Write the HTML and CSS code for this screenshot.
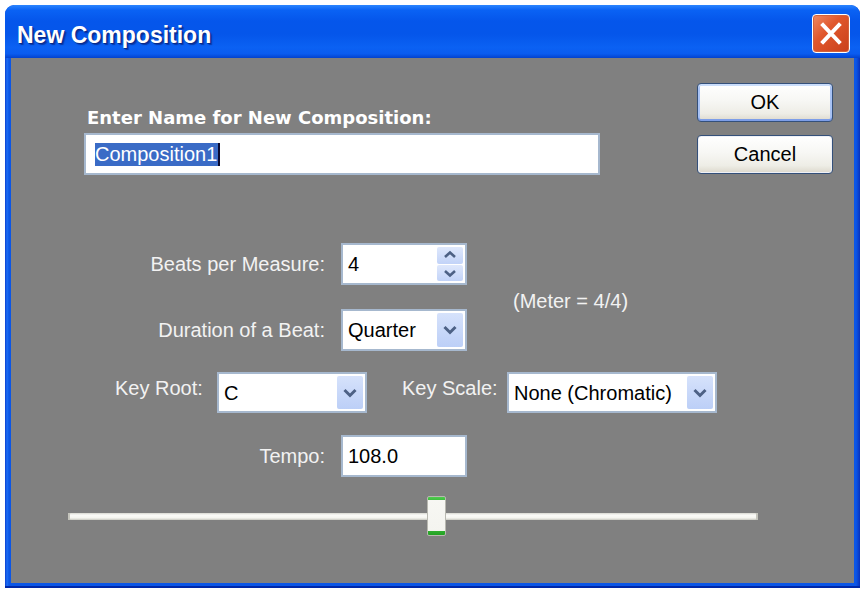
FILE: index.html
```html
<!DOCTYPE html>
<html>
<head>
<meta charset="utf-8">
<title>New Composition</title>
<link rel="stylesheet" href="styles.css">
</head>
<body>
<div class="window">
  <div class="titlebar">
    <span class="title">New Composition</span>
    <div class="close">
      <svg viewBox="0 0 38 39" width="38" height="39"><path d="M11 11 L27 28 M27 11 L11 28" stroke="#fff" stroke-width="4" stroke-linecap="square" fill="none"/></svg>
    </div>
  </div>
  <div class="client">
    <div class="top">
      <div class="name-block">
        <div class="name-label">Enter Name for New Composition:</div>
        <div class="field name-field"><span class="sel">Composition1</span><span class="caret"></span></div>
      </div>
      <div class="buttons">
        <div class="btn btn-default">OK</div>
        <div class="btn">Cancel</div>
      </div>
    </div>

    <div class="meter-grid">
      <div class="label">Beats per Measure:</div>
      <div class="field box">
        <span class="value">4</span>
        <div class="spin">
          <div class="spin-btn"><svg viewBox="0 0 26 16" width="26" height="16"><polyline points="8,10 13,5.5 18,10" stroke="#4d6185" stroke-width="2.6" fill="none"/></svg></div>
          <div class="spin-btn"><svg viewBox="0 0 26 16" width="26" height="16"><polyline points="8,6 13,10.5 18,6" stroke="#4d6185" stroke-width="2.6" fill="none"/></svg></div>
        </div>
      </div>
      <div class="meter">(Meter = 4/4)</div>
      <div class="label">Duration of a Beat:</div>
      <div class="field box">
        <span class="value">Quarter</span>
        <div class="drop-btn"><svg viewBox="0 0 26 32" width="26" height="32"><polyline points="7.5,13 13,18.5 18.5,13" stroke="#4d6185" stroke-width="3" fill="none"/></svg></div>
      </div>
    </div>

    <div class="key-row">
      <div class="key-label">Key Root:</div>
      <div class="field key-root">
        <span class="value">C</span>
        <div class="drop-btn"><svg viewBox="0 0 26 32" width="26" height="32"><polyline points="7.5,13 13,18.5 18.5,13" stroke="#4d6185" stroke-width="3" fill="none"/></svg></div>
      </div>
      <div class="key-label scale-label">Key Scale:</div>
      <div class="field key-scale">
        <span class="value">None (Chromatic)</span>
        <div class="drop-btn"><svg viewBox="0 0 26 32" width="26" height="32"><polyline points="7.5,13 13,18.5 18.5,13" stroke="#4d6185" stroke-width="3" fill="none"/></svg></div>
      </div>
    </div>

    <div class="tempo-grid">
      <div class="label">Tempo:</div>
      <div class="field box"><span class="value">108.0</span></div>
    </div>

    <div class="slider">
      <div class="track"></div>
      <div class="thumb"></div>
    </div>
  </div>
</div>
</body>
</html>
```

FILE: styles.css
```css
html, body {
  margin: 0;
  padding: 0;
  background: #ffffff;
}

body {
  font-family: "Liberation Sans", Arial, sans-serif;
  font-size: 20px;
}

.window {
  margin: 5px 0 0 5px;
  width: 855px;
  height: 583px;
  box-sizing: border-box;
  display: flex;
  flex-direction: column;
  border-radius: 9px 9px 0 0;
  overflow: hidden;
  background: linear-gradient(to right, #0a3fcf 0px, #1d6df4 2px, #0b56e6 4px, #0b56e6 calc(100% - 4px), #0a44d2 calc(100% - 2px), #0831b8 100%);
  padding: 0 6px 5px 6px;
  box-shadow: inset 0 -2px 0 #0028a8;
}

.titlebar {
  height: 53px;
  flex: none;
  margin: 0 -6px;
  padding: 0 10px 0 12px;
  display: flex;
  justify-content: space-between;
  align-items: flex-start;
  background: linear-gradient(to bottom, #2b85ff 0%, #0a62f4 10%, #0556eb 30%, #0556ea 55%, #0b61f3 80%, #0a5cf0 92%, #0342cd 100%);
  border-radius: 9px 9px 0 0;
}

.title {
  margin-top: 15px;
  line-height: 30px;
  font-family: "Liberation Sans", Arial, sans-serif;
  font-weight: bold;
  font-size: 23px;
  color: #ffffff;
  text-shadow: 1px 1px 0 #0b2a8a, 2px 2px 1px rgba(0, 20, 100, 0.5);
}

.close {
  margin-top: 9px;
  width: 38px;
  height: 39px;
  box-sizing: border-box;
  border: 1px solid #ffffff;
  border-radius: 4px;
  background: linear-gradient(135deg, #f08a63 0%, #e0572c 40%, #c9401a 100%);
  box-shadow: inset 0 0 0 1px #d4623b;
}

.close svg {
  display: block;
  margin: -1px;
}

.client {
  flex: 1;
  background: #808080;
  display: flex;
  flex-direction: column;
}

.top {
  display: flex;
  align-items: flex-start;
}

.name-block {
  margin-left: 73px;
  margin-top: 49px;
}

.name-label {
  font-family: "DejaVu Sans", sans-serif;
  font-weight: bold;
  font-size: 18px;
  line-height: 22px;
  color: #ffffff;
  margin-left: 3px;
}

.field {
  background: #ffffff;
  border: 2px solid #a6b8ce;
  box-sizing: border-box;
  position: relative;
  display: flex;
  align-items: center;
  color: #000000;
}

.name-field {
  margin-top: 4px;
  width: 516px;
  height: 42px;
  padding-left: 9px;
}

.sel {
  background: #3a6bc6;
  color: #ffffff;
  line-height: 23px;
  padding-right: 1px;
}

.caret {
  width: 2px;
  height: 23px;
  background: #0a0a30;
}

.buttons {
  margin-left: auto;
  margin-right: 21px;
  margin-top: 25px;
  display: flex;
  flex-direction: column;
  gap: 13px;
}

.btn {
  width: 136px;
  height: 39px;
  box-sizing: border-box;
  border: 1px solid #34507a;
  border-radius: 4px;
  background: linear-gradient(to bottom, #ffffff 0%, #f7f7f4 45%, #eeede6 80%, #dcd8cc 100%);
  box-shadow: inset 0 0 0 1px #eef0f6;
  display: flex;
  align-items: center;
  justify-content: center;
  color: #000000;
}

.btn-default {
  box-shadow: inset 0 2px 0 #c9dcfa, inset 0 -2px 0 #7d9ee8, inset 2px 0 0 #a8c2f4, inset -2px 0 0 #a8c2f4;
}

.meter-grid,
.tempo-grid {
  display: grid;
  grid-template-columns: 314px 126px auto;
  column-gap: 16px;
  align-items: center;
}

.meter-grid {
  margin-top: 68px;
  grid-template-rows: 42px 42px;
  row-gap: 24px;
}

.label {
  text-align: right;
  color: #f2f2f2;
  line-height: 24px;
}

.box {
  height: 42px;
  padding-left: 5px;
}

.meter-grid .box:nth-of-type(2) {
  grid-column: 2;
  grid-row: 1;
}

.meter {
  grid-column: 3;
  grid-row: 1 / span 2;
  margin-left: 30px;
  margin-top: 8px;
  color: #f2f2f2;
  line-height: 24px;
}

.value {
  line-height: 24px;
}

.spin {
  position: absolute;
  right: 2px;
  top: 2px;
  bottom: 2px;
  width: 26px;
  display: flex;
  flex-direction: column;
  gap: 1px;
}

.spin-btn {
  flex: 1;
  background: linear-gradient(to bottom, #dfe8fc, #c2d3f8);
  border-radius: 2px;
  display: flex;
  align-items: center;
  justify-content: center;
}

.spin-btn svg {
  display: block;
}

.drop-btn {
  position: absolute;
  right: 2px;
  top: 2px;
  bottom: 2px;
  width: 26px;
  border-radius: 2px;
  background: linear-gradient(to bottom, #d6e2fb, #bccff7);
  display: flex;
  align-items: center;
  justify-content: center;
}

.drop-btn svg {
  display: block;
}

.key-row {
  margin-top: 21px;
  padding-left: 104px;
  display: grid;
  grid-template-columns: 102px 150px 140px 210px;
  align-items: flex-start;
}

.key-label {
  color: #f2f2f2;
  line-height: 24px;
  margin-top: 4px;
}

.scale-label {
  padding-left: 35px;
}

.key-root,
.key-scale {
  height: 41px;
  padding-left: 5px;
}

.tempo-grid {
  margin-top: 22px;
}

.slider {
  margin-top: 19px;
  margin-left: 57px;
  width: 690px;
  height: 40px;
  position: relative;
  display: flex;
  align-items: center;
}

.track {
  width: 100%;
  height: 7px;
  border-radius: 1px;
  background: linear-gradient(to bottom, #d7d7d0 0%, #fbfbf8 30%, #f5f5f0 70%, #c9c9c1 100%);
  box-shadow: inset 2px 0 0 #c4c4bc, inset -2px 0 0 #c4c4bc;
}

.thumb {
  position: absolute;
  left: 359px;
  top: 0;
  width: 19px;
  height: 40px;
  box-sizing: border-box;
  border: 1px solid #b8b8b0;
  border-radius: 2px;
  background: linear-gradient(to bottom, #4fca4f 0px, #3dbd3d 3px, #f7f7f3 3px, #f4f4ef calc(100% - 4px), #2faf2f calc(100% - 4px), #22a022 100%);
}
```
